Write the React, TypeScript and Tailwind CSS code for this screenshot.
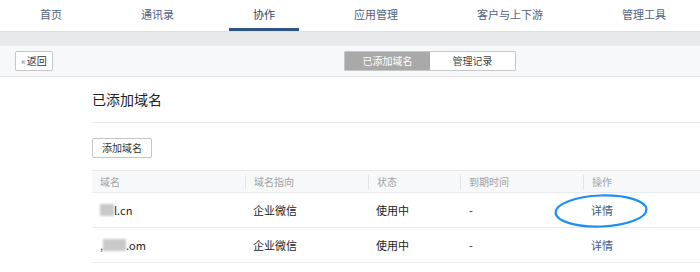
import React from 'react';

const navItems = ['首页', '通讯录', '协作', '应用管理', '客户与上下游', '管理工具'];

const columns = [
    { label: '域名', w: 'w-[153px]' },
    { label: '域名指向', w: 'w-[123px]' },
    { label: '状态', w: 'w-[92px]' },
    { label: '到期时间', w: 'w-[123px]' },
    { label: '操作', w: 'flex-1' },
];

const rows = [
    { prefix: '', mask: 'w-[14px]', suffix: 'l.cn' },
    { prefix: ',', mask: 'w-[23px]', suffix: '.om' },
];

const App: React.FC = () => {
    return (
        <div className="w-[700px] h-[272px] overflow-hidden bg-white font-['Noto_Sans_CJK_SC','Noto_Sans',sans-serif]">
            {/* Top nav */}
            <div className="flex h-[32px] pl-[16px] gap-[31px] bg-white border-b border-[#dedfe1]">
                {navItems.map((item) => {
                    const active = item === '协作';
                    return (
                        <div
                            key={item}
                            className={`h-full px-[24px] flex items-center text-[11px] border-b-[3px] ${active ? 'border-[#2d5587] text-[#2b4466]' : 'border-transparent text-[#51627c]'}`}
                        >
                            {item}
                        </div>
                    );
                })}
            </div>

            {/* Gray band */}
            <div className="h-[14px] bg-[#e8e9eb]" />

            {/* Sub bar */}
            <div className="relative h-[31px] bg-[#f7f8fa] border-b border-[#e4e5e7] flex items-center px-[15px]">
                <button className="h-[20px] w-[38px] justify-center bg-white border border-[#c6c6c6] rounded-[2px] text-[10px] text-[#333] flex items-center leading-none">
                    <span className="text-[#777] mr-[1px] text-[9px]">«</span>返回
                </button>
                <div className="ml-[291px] flex h-[20px] border border-[#c6c6c6] rounded-[1px] text-[10px] leading-none">
                    <div className="w-[85px] bg-[#a9a9a9] text-white flex items-center justify-center">已添加域名</div>
                    <div className="w-[85px] bg-white text-[#444] flex items-center justify-center">管理记录</div>
                </div>
            </div>

            {/* Content */}
            <div className="pl-[92px]">
                <div className="pt-[12px] pb-[13px] border-b border-[#e8e8e8]">
                    <h1 className="text-[14px] leading-[20px] text-[#222]">已添加域名</h1>
                </div>

                <button className="mt-[15px] h-[20px] px-[9px] bg-white border border-[#c6c6c6] rounded-[2px] text-[10px] text-[#333] leading-none">
                    添加域名
                </button>

                {/* Table */}
                <div className="relative mt-[12px]">
                    <div className="flex h-[23px] bg-[#f7f8fa] border-t border-b border-[#e8e9eb] items-center">
                        {columns.map((c, i) => (
                            <div key={c.label} className={`${c.w} h-[14px] flex items-center pl-[8px] text-[10px] text-[#a2a2a2] ${i > 0 ? 'border-l border-[#e2e2e2]' : ''}`}>
                                {c.label}
                            </div>
                        ))}
                    </div>

                    {rows.map((r, idx) => (
                        <div key={idx} className="flex h-[35px] items-center border-b border-[#e8e9eb] text-[11px] text-[#222]">
                            <div className="w-[153px] pl-[8px] flex items-center">
                                {r.prefix && <span className="text-[#555]">{r.prefix}</span>}
                                <span className={`${r.mask} h-[12px] bg-[#c9c9c9] blur-[1px]`} />
                                <span>{r.suffix}</span>
                            </div>
                            <div className="w-[123px] pl-[8px]">企业微信</div>
                            <div className="w-[92px] pl-[8px]">使用中</div>
                            <div className="w-[123px] pl-[9px]">-</div>
                            <div className="flex-1 pl-[8px] text-[#3b5b82]">详情</div>
                        </div>
                    ))}

                    {/* Annotation ellipse */}
                    <svg className="absolute left-[461px] top-[23px] pointer-events-none" width="96" height="36" viewBox="0 0 96 36">
                        <ellipse cx="48" cy="18" rx="45.5" ry="15.5" fill="none" stroke="#1e8ff0" strokeWidth="2.2" transform="rotate(-2 48 18)" />
                    </svg>
                </div>
            </div>
        </div>
    );
};

export default App;
